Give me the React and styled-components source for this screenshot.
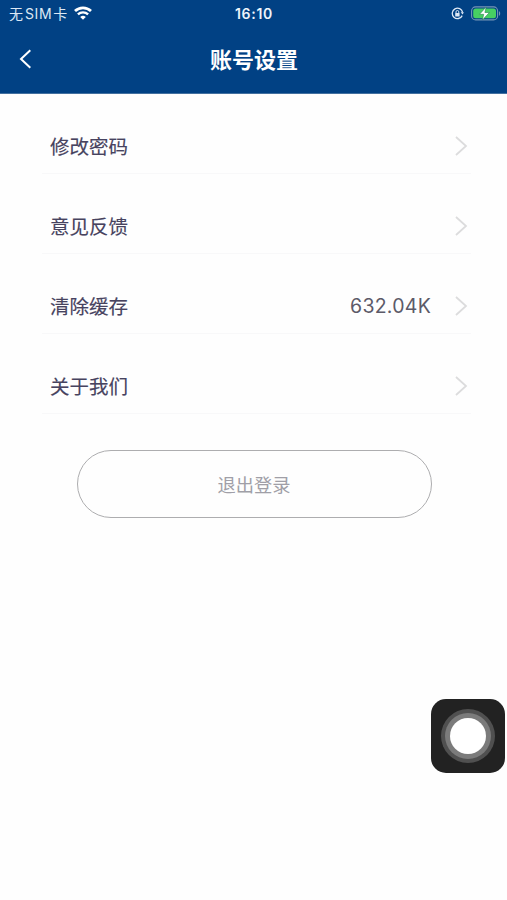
import styled, { createGlobalStyle } from "styled-components";

const items = [
  { label: "修改密码" },
  { label: "意见反馈" },
  { label: "清除缓存", value: "632.04K" },
  { label: "关于我们" },
];

export default function App() {
  return (
    <Screen>
      <GlobalStyle />
      <Header>
        <StatusBar>
          <Carrier>
            <span>无</span>
            <CarrierLatin>SIM</CarrierLatin>
            <span>卡</span>
            <WifiIcon />
          </Carrier>
          <Clock>16:10</Clock>
          <StatusIcons>
            <RotationLockIcon />
            <BatteryIcon />
          </StatusIcons>
        </StatusBar>
        <NavBar>
          <BackButton aria-label="返回">
            <svg width="13" height="20" viewBox="0 0 13 20" fill="none">
              <path d="M11.3 1.2L2 10l9.3 8.8" stroke="#fff" strokeWidth="2" />
            </svg>
          </BackButton>
          <Title>账号设置</Title>
        </NavBar>
      </Header>
      <List>
        {items.map((item) => (
          <Row key={item.label}>
            <Label>{item.label}</Label>
            {item.value && <Value>{item.value}</Value>}
            <svg width="13" height="20" viewBox="0 0 13 20" fill="none">
              <path d="M1 1l10 9-10 9" stroke="#dcdcdd" strokeWidth="1.8" />
            </svg>
          </Row>
        ))}
      </List>
      <LogoutButton>退出登录</LogoutButton>
      <AssistiveTouch>
        <Ring $size={54} $color="#505050">
          <Ring $size={46} $color="#7b7b7b">
            <Ring $size={36} $color="#fff" />
          </Ring>
        </Ring>
      </AssistiveTouch>
    </Screen>
  );
}

function WifiIcon() {
  return (
    <svg width="18" height="14" viewBox="0 0 18 14" fill="none">
      <path d="M1 5.1a11.6 11.6 0 0 1 16 0" stroke="#fff" strokeWidth="2.8" />
      <path d="M3.9 8.4a7.4 7.4 0 0 1 10.2 0" stroke="#fff" strokeWidth="2.4" />
      <path d="M9 13.8L6.2 11a4 4 0 0 1 5.6 0z" fill="#fff" />
    </svg>
  );
}

function RotationLockIcon() {
  return (
    <svg width="13" height="13" viewBox="0 0 13 13" fill="none">
      <path
        d="M11.2 8.6a5.2 5.2 0 1 1 .4-3.2"
        stroke="#dfe9f6"
        strokeWidth="1.3"
      />
      <path d="M9.7 5.3h3.2l-1.4 2.2z" fill="#dfe9f6" />
      <rect x="4.2" y="6" width="4.4" height="3.5" rx="0.5" fill="#dfe9f6" />
      <path d="M5 6V4.9a1.4 1.4 0 0 1 2.8 0V6" stroke="#dfe9f6" />
    </svg>
  );
}

function BatteryIcon() {
  return (
    <svg width="30" height="15" viewBox="0 0 30 15" fill="none">
      <rect
        x="0.6"
        y="0.9"
        width="26"
        height="13"
        rx="4"
        stroke="#7795b5"
        strokeWidth="1.1"
      />
      <rect x="2.2" y="2.5" width="22.8" height="9.8" rx="2.5" fill="#47cf62" />
      <path d="M28 5.2c1.6.5 1.6 4 0 4.5z" fill="#7795b5" />
      <path
        d="M15.2 1L8.5 8.3h4.2L11.4 14l7-7.5h-4.5z"
        fill="#fff"
        stroke="#26854f"
        strokeWidth="0.6"
      />
    </svg>
  );
}

const GlobalStyle = createGlobalStyle`
  * {
    box-sizing: border-box;
  }
  body {
    margin: 0;
    background-color: #fefefe;
    font-family: "Inter", "Noto Sans CJK SC", sans-serif;
  }
`;

const Screen = styled.div`
  display: flex;
  flex-direction: column;
  min-height: 100vh;
`;

const Header = styled.header`
  height: 94px;
  background-color: #014184;
  color: #fff;
  border-bottom: 1px solid #43709f;
`;

const StatusBar = styled.div`
  display: grid;
  grid-template-columns: 1fr auto 1fr;
  align-items: center;
  height: 27px;
  padding: 0 6px 0 9px;
`;

const Carrier = styled.div`
  display: flex;
  align-items: center;
  font-size: 14px;
  line-height: 20px;
  color: #dce8f5;

  svg {
    margin: -1px 0 0 7px;
  }
`;

const CarrierLatin = styled.span`
  margin: 0 1px 0 2px;
  letter-spacing: 0.6px;
`;

const Clock = styled.div`
  margin-right: 2px;
  font-size: 14px;
  font-weight: 600;
  letter-spacing: 0.7px;
  color: #eef4fb;
`;

const StatusIcons = styled.div`
  display: flex;
  align-items: center;
  justify-content: flex-end;
  gap: 7px;
`;

const NavBar = styled.div`
  display: grid;
  grid-template-columns: 1fr auto 1fr;
  align-items: center;
  height: 64px;
  padding: 0 18px 0 19px;
`;

const BackButton = styled.button`
  display: flex;
  justify-self: start;
  padding: 0;
  border: 0;
  background: none;
`;

const Title = styled.h1`
  margin: 2px 0 0;
  font-size: 22px;
  font-weight: 700;
  line-height: 32px;
`;

const List = styled.ul`
  margin: 0;
  padding: 0 36px 0 42px;
  list-style: none;
`;

const Row = styled.li`
  display: flex;
  align-items: center;
  height: 80px;
  padding: 24px 3px 0 8px;
  border-bottom: 1px solid #f8f8f9;
`;

const Label = styled.span`
  flex: 1;
  padding-top: 2px;
  font-size: 19.5px;
  font-weight: 400;
  line-height: 28px;
  color: #47435f;
  -webkit-text-stroke: 0.15px #47435f;
`;

const Value = styled.span`
  margin-right: 24px;
  font-size: 19.5px;
  letter-spacing: 0.25px;
  color: #5c5a68;
`;

const LogoutButton = styled.button`
  width: 355px;
  height: 68px;
  margin: 36px 0 0 76.5px;
  padding: 0;
  border: 1.5px solid #adadaf;
  border-radius: 34px;
  background: none;
  font-family: inherit;
  font-size: 18.3px;
  color: #a09fa7;
`;

const AssistiveTouch = styled.div`
  position: fixed;
  right: 2px;
  bottom: 127px;
  display: flex;
  align-items: center;
  justify-content: center;
  width: 74px;
  height: 74px;
  border-radius: 15px;
  background-color: #222;
`;

const Ring = styled.div`
  display: flex;
  align-items: center;
  justify-content: center;
  width: ${(props) => props.$size}px;
  height: ${(props) => props.$size}px;
  border-radius: 50%;
  background-color: ${(props) => props.$color};
`;
